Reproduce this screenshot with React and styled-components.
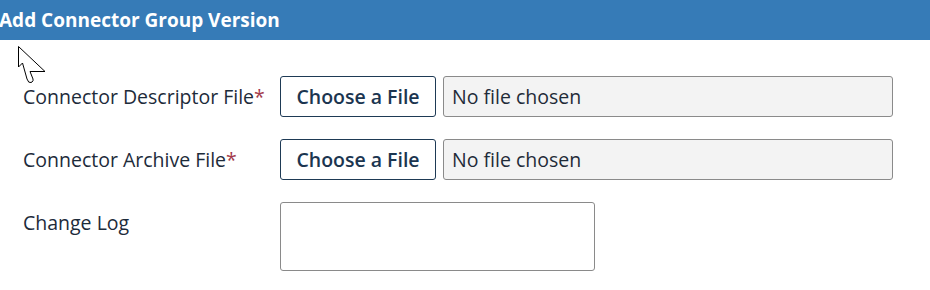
import React from "react";
import styled, { createGlobalStyle } from "styled-components";

const Global = createGlobalStyle`
  html, body { margin: 0; padding: 0; background: #ffffff; }
  body { font-family: "Open Sans", "Noto Sans", sans-serif; }
`;

const Page = styled.div`
  position: relative;
  width: 930px;
  height: 290px;
  background: #ffffff;
  overflow: hidden;
`;

const Header = styled.div`
  height: 40px;
  background: #367bb7;
  color: #ffffff;
  font-size: 19px;
  font-weight: 700;
  line-height: 40px;
  margin-left: -1px;
  white-space: nowrap;
`;

const Form = styled.div`
  display: flex;
  flex-direction: column;
  gap: 22px;
  padding: 36px 0 0 23px;
`;

const Row = styled.div`
  display: flex;
  align-items: flex-start;
`;

const Label = styled.div`
  width: 257px;
  flex: none;
  font-size: 19.5px;
  color: #1d2b3a;
  padding-top: 7px;
  line-height: 27px;
  white-space: nowrap;
`;

const Req = styled.span`
  color: #a33a4c;
`;

const Button = styled.button`
  flex: none;
  width: 156px;
  height: 41px;
  box-sizing: border-box;
  border: 1px solid #1e3a55;
  border-radius: 3px;
  background: #ffffff;
  color: #1b3550;
  font-family: inherit;
  font-size: 19.5px;
  font-weight: 600;
  padding: 0;
  margin-right: 7px;
`;

const FileBox = styled.div`
  width: 450px;
  height: 41px;
  box-sizing: border-box;
  border: 1px solid #8a8a8a;
  border-radius: 3px;
  background: #f3f3f3;
  color: #1f2b38;
  font-size: 19.5px;
  line-height: 39px;
  padding-left: 8px;
`;

const TextArea = styled.textarea`
  width: 315px;
  height: 69px;
  box-sizing: border-box;
  border: 1px solid #8a8a8a;
  border-radius: 3px;
  background: #ffffff;
  resize: none;
  margin: 0;
  display: block;
`;

const Cursor = styled.svg`
  position: absolute;
  left: 17px;
  top: 45px;
`;

function FileRow({ label }) {
  return (
    <Row>
      <Label>
        {label}
        <Req>*</Req>
      </Label>
      <Button type="button">Choose a File</Button>
      <FileBox>No file chosen</FileBox>
    </Row>
  );
}

export default function App() {
  return (
    <Page>
      <Global />
      <Header>Add Connector Group Version</Header>
      <Form>
        <FileRow label="Connector Descriptor File" />
        <FileRow label="Connector Archive File" />
        <Row>
          <Label>Change Log</Label>
          <TextArea />
        </Row>
      </Form>
      <Cursor width="30" height="41" viewBox="0 0 30 41">
        <path
          d="M1.5 1.5 L1.5 22 L5.5 18 L10 34 Q11.5 38.5 14 37.5 L15 37 Q16.5 36 16 34 L13 26.5 L28 26.5 Z"
          fill="#ffffff"
          stroke="#000000"
          strokeWidth="1"
          strokeLinejoin="miter"
        />
      </Cursor>
    </Page>
  );
}
